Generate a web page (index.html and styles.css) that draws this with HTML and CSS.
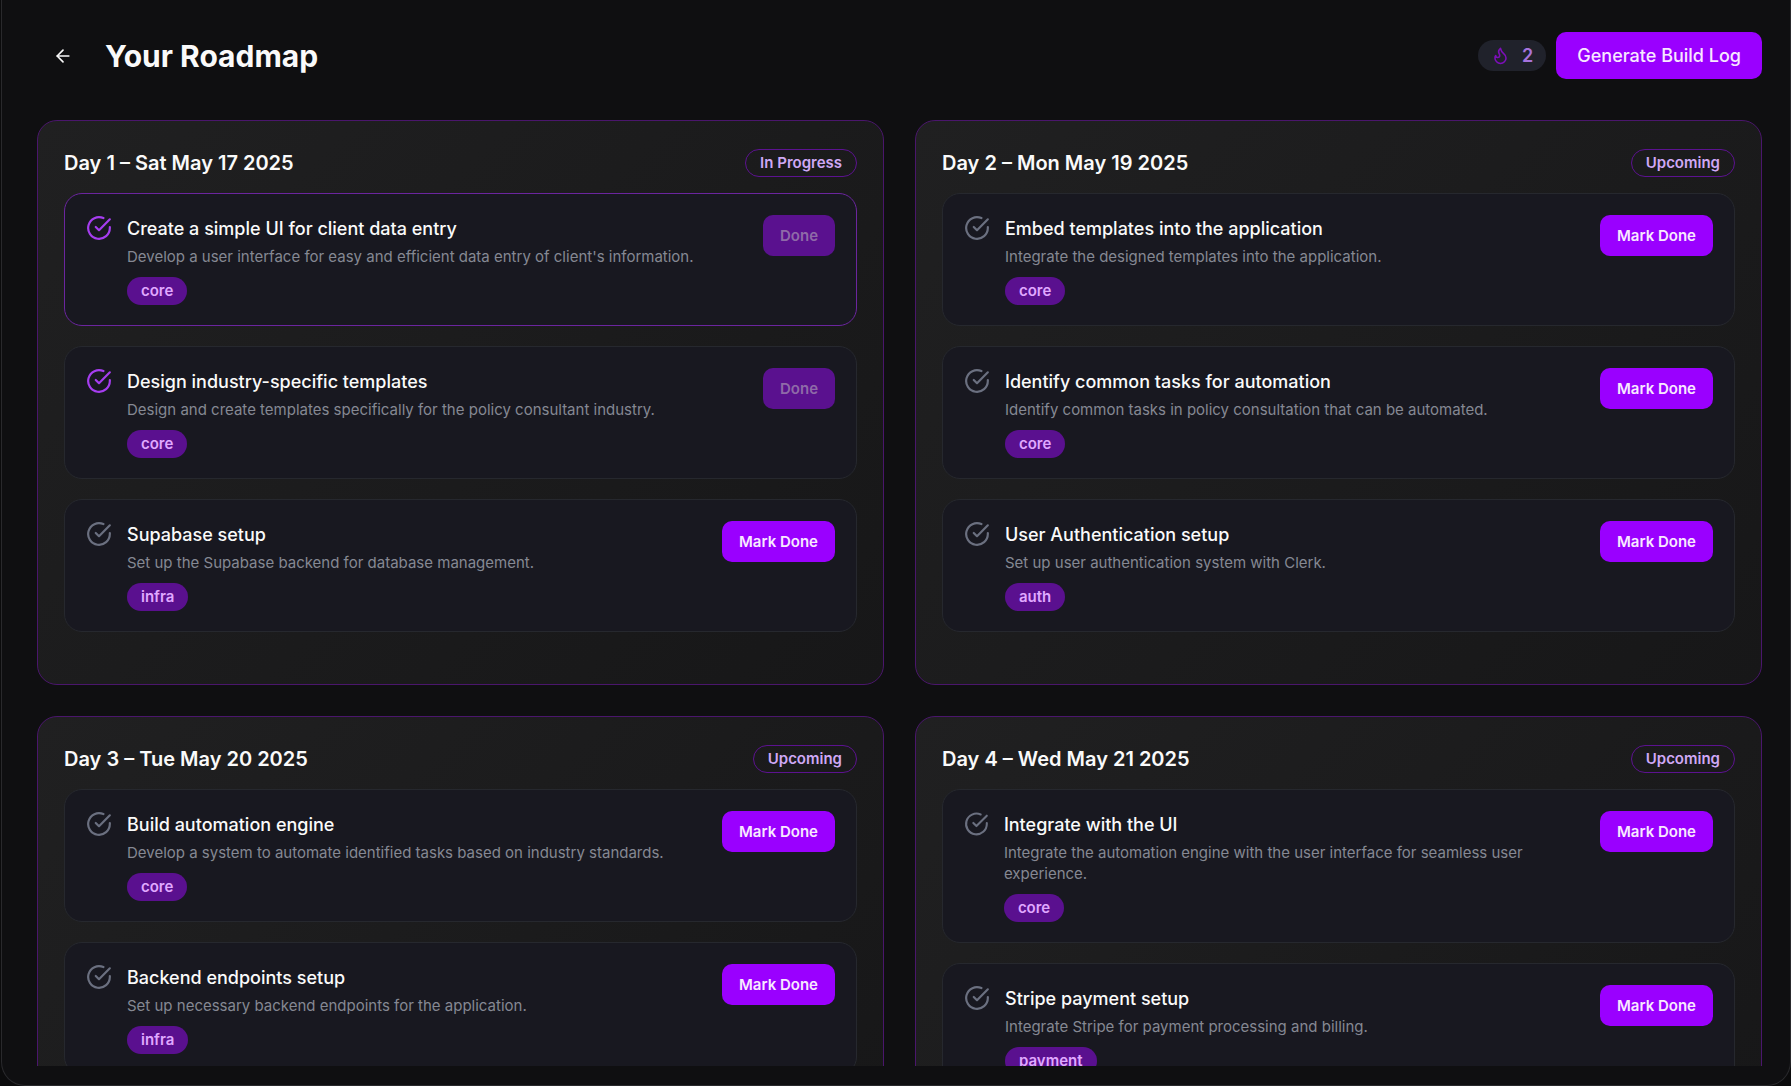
FILE: index.html
```html
<!DOCTYPE html>
<html lang="en">
<head>
<meta charset="utf-8">
<meta name="viewport" content="width=device-width, initial-scale=1">
<title>Your Roadmap</title>
<link rel="stylesheet" href="styles.css">
</head>
<body>
<svg class="sprite" aria-hidden="true">
  <symbol id="check" viewBox="0 0 24 24"><path d="M22 11.08V12a10 10 0 1 1-5.93-9.14"/><path d="m9 11 3 3L22 4"/></symbol>
</svg>
<div class="window">
  <header class="topbar">
    <button class="back" type="button" aria-label="Back">
      <svg class="back-icon" viewBox="0 0 24 24"><path d="m12 19-7-7 7-7"/><path d="M19 12H5"/></svg>
    </button>
    <h1 class="title">Your Roadmap</h1>
    <div class="actions">
      <span class="streak">
        <svg class="flame" viewBox="0 0 24 24"><path d="M8.5 14.5A2.5 2.5 0 0 0 11 12c0-1.38-.5-2-1-3-1.072-2.143-.224-4.054 2-6 .5 2.5 2 4.9 4 6.5 2 1.6 3 3.5 3 5.5a7 7 0 1 1-14 0c0-1.153.433-2.294 1-3a2.5 2.5 0 0 0 2.5 2.5z"/></svg>
        2
      </span>
      <button class="generate" type="button">Generate Build Log</button>
    </div>
  </header>
  <main class="board">
    <section class="day">
      <div class="day-head"><h2 class="day-title">Day 1 – Sat May 17 2025</h2><span class="status">In Progress</span></div>
      <article class="task task-active">
        <div class="task-main">
          <svg class="check check-done"><use href="#check"/></svg>
          <div class="task-text"><h3 class="task-title">Create a simple UI for client data entry</h3><p class="task-desc">Develop a user interface for easy and efficient data entry of client's information.</p><span class="tag">core</span></div>
        </div>
        <button class="mark" type="button" disabled>Done</button>
      </article>
      <article class="task">
        <div class="task-main">
          <svg class="check check-done"><use href="#check"/></svg>
          <div class="task-text"><h3 class="task-title">Design industry-specific templates</h3><p class="task-desc">Design and create templates specifically for the policy consultant industry.</p><span class="tag">core</span></div>
        </div>
        <button class="mark" type="button" disabled>Done</button>
      </article>
      <article class="task">
        <div class="task-main">
          <svg class="check"><use href="#check"/></svg>
          <div class="task-text"><h3 class="task-title">Supabase setup</h3><p class="task-desc">Set up the Supabase backend for database management.</p><span class="tag">infra</span></div>
        </div>
        <button class="mark" type="button">Mark Done</button>
      </article>
    </section>
    <section class="day">
      <div class="day-head"><h2 class="day-title">Day 2 – Mon May 19 2025</h2><span class="status">Upcoming</span></div>
      <article class="task">
        <div class="task-main">
          <svg class="check"><use href="#check"/></svg>
          <div class="task-text"><h3 class="task-title">Embed templates into the application</h3><p class="task-desc">Integrate the designed templates into the application.</p><span class="tag">core</span></div>
        </div>
        <button class="mark" type="button">Mark Done</button>
      </article>
      <article class="task">
        <div class="task-main">
          <svg class="check"><use href="#check"/></svg>
          <div class="task-text"><h3 class="task-title">Identify common tasks for automation</h3><p class="task-desc">Identify common tasks in policy consultation that can be automated.</p><span class="tag">core</span></div>
        </div>
        <button class="mark" type="button">Mark Done</button>
      </article>
      <article class="task">
        <div class="task-main">
          <svg class="check"><use href="#check"/></svg>
          <div class="task-text"><h3 class="task-title">User Authentication setup</h3><p class="task-desc">Set up user authentication system with Clerk.</p><span class="tag">auth</span></div>
        </div>
        <button class="mark" type="button">Mark Done</button>
      </article>
    </section>
    <section class="day">
      <div class="day-head"><h2 class="day-title">Day 3 – Tue May 20 2025</h2><span class="status">Upcoming</span></div>
      <article class="task">
        <div class="task-main">
          <svg class="check"><use href="#check"/></svg>
          <div class="task-text"><h3 class="task-title">Build automation engine</h3><p class="task-desc">Develop a system to automate identified tasks based on industry standards.</p><span class="tag">core</span></div>
        </div>
        <button class="mark" type="button">Mark Done</button>
      </article>
      <article class="task">
        <div class="task-main">
          <svg class="check"><use href="#check"/></svg>
          <div class="task-text"><h3 class="task-title">Backend endpoints setup</h3><p class="task-desc">Set up necessary backend endpoints for the application.</p><span class="tag">infra</span></div>
        </div>
        <button class="mark" type="button">Mark Done</button>
      </article>
    </section>
    <section class="day">
      <div class="day-head"><h2 class="day-title">Day 4 – Wed May 21 2025</h2><span class="status">Upcoming</span></div>
      <article class="task">
        <div class="task-main">
          <svg class="check"><use href="#check"/></svg>
          <div class="task-text"><h3 class="task-title">Integrate with the UI</h3><p class="task-desc">Integrate the automation engine with the user interface for seamless user experience.</p><span class="tag">core</span></div>
        </div>
        <button class="mark" type="button">Mark Done</button>
      </article>
      <article class="task">
        <div class="task-main">
          <svg class="check"><use href="#check"/></svg>
          <div class="task-text"><h3 class="task-title">Stripe payment setup</h3><p class="task-desc">Integrate Stripe for payment processing and billing.</p><span class="tag">payment</span></div>
        </div>
        <button class="mark" type="button">Mark Done</button>
      </article>
    </section>
  </main>
</div>
</body>
</html>
```
FILE: styles.css
```css
* { box-sizing: border-box; }

body {
  margin: 0;
  background: #0b0b0c;
  color: #fafafa;
  font-family: Inter, "Liberation Sans", sans-serif;
}

h1, h2, h3, p { margin: 0; }
button { border: 0; font-family: inherit; cursor: pointer; }
svg { fill: none; stroke: currentColor; stroke-width: 2; stroke-linecap: round; stroke-linejoin: round; }
.sprite { display: none; }

.window {
  display: flex;
  flex-direction: column;
  height: 100vh;
  margin-left: 1px;
  padding: 32px 28px 19px 35px;
  background: #0f0f11;
  border: 1px solid #29292c;
  border-top: 0;
  border-radius: 0 0 24px 24px;
}

.topbar { display: flex; align-items: center; flex: none; height: 47px; margin-bottom: 41px; }
.back { display: flex; padding: 16px; background: none; color: #fafafa; }
.back-icon { width: 20px; height: 20px; }
.title { margin-left: 16px; font-size: 30px; line-height: 36px; font-weight: 700; }
.actions { display: flex; align-items: center; gap: 10px; margin-left: auto; }
.streak {
  display: flex; align-items: center; gap: 12px;
  height: 31px; padding: 0 13px;
  border-radius: 16px; background: #20222b; color: #a673dc;
  font-size: 18px; font-weight: 600;
}
.flame { width: 19px; height: 19px; color: #7c0fb8; }
.generate {
  height: 47px; padding: 0 21px;
  border-radius: 10px; background: #9a00ff; color: #f8e8ff;
  font-size: 18px; font-weight: 500;
}

.board {
  display: grid;
  grid-template-columns: 1fr 1fr;
  align-content: start;
  gap: 31px;
  flex: 1;
  min-height: 0;
  overflow-y: auto;
  scrollbar-width: none;
}

.day {
  padding: 28px 26px 32px;
  border: 1px solid #4a166c;
  border-radius: 20px;
  background: linear-gradient(135deg, #202021, #171718);
}
.day-head { display: flex; align-items: center; justify-content: space-between; height: 28px; margin-bottom: 16px; }
.day-title { font-size: 20px; line-height: 28px; font-weight: 600; }
.status {
  padding: 0 14px;
  border: 1px solid #5c1290;
  border-radius: 14px;
  color: #cfa8f5;
  font-size: 15px; line-height: 26px; font-weight: 600;
}

.task {
  display: flex;
  align-items: flex-start;
  justify-content: space-between;
  gap: 16px;
  margin-bottom: 20px;
  padding: 21px 21px 20px;
  border: 1px solid #26282e;
  border-radius: 18px;
  background: #181820;
}
.task-active { border-color: #6b259f; }
.task-main { display: flex; gap: 15px; }
.check { width: 26px; height: 26px; color: #6b7080; }
.check-done { color: #a63df0; }
.task-title { margin-bottom: 3px; font-size: 18px; line-height: 28px; font-weight: 500; }
.task-desc { margin-bottom: 10px; color: #858893; font-size: 15px; line-height: 21px; }
.tag {
  display: block; width: fit-content;
  padding: 0 14px;
  border-radius: 14px;
  background: #5a108f; color: #e0a8ff;
  font-size: 15px; line-height: 28px; font-weight: 600;
}
.mark {
  flex: none;
  height: 41px; padding: 0 17px;
  border-radius: 10px;
  background: #9a00ff; color: #f8e8ff;
  font-size: 15px; font-weight: 600;
}
.mark:disabled { background: #5a118f; color: #8f6aa8; cursor: default; }
```
